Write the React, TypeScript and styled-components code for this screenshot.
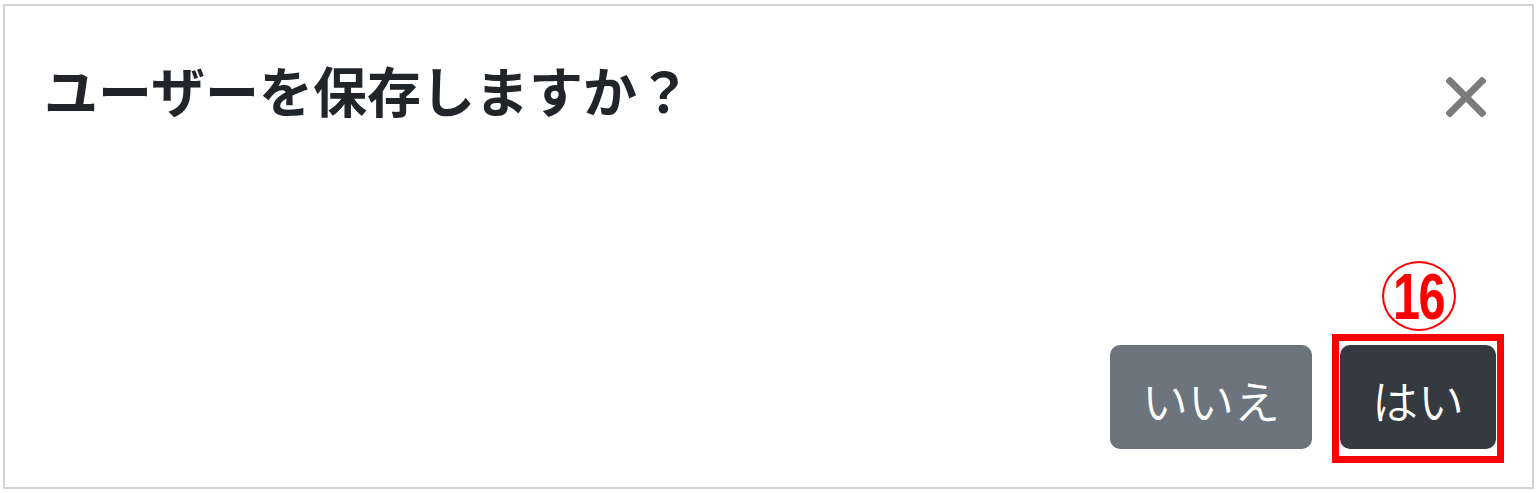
import React from "react";
import styled, { createGlobalStyle } from "styled-components";

const Global = createGlobalStyle`
  html, body { margin: 0; padding: 0; background: #ffffff; }
  body { font-family: "Noto Sans CJK JP", "Noto Sans", sans-serif; }
  * { box-sizing: border-box; }
`;

const Modal = styled.div`
  margin: 4px 4px 4px 3px;
  width: 1531px;
  height: 485px;
  border: 2px solid #d2d2d2;
  display: flex;
  flex-direction: column;
  background: #fff;
`;

const Header = styled.div`
  display: flex;
  align-items: center;
  justify-content: space-between;
  padding: 52px 45px 0 39px;
`;

const Title = styled.h5`
  margin: 0;
  font-size: 54px;
  line-height: 64px;
  font-weight: 700;
  color: #212529;
`;

const CloseButton = styled.button`
  border: 0;
  background: transparent;
  padding: 0;
  width: 42px;
  height: 42px;
  margin-top: 14px;
  display: flex;
  align-items: center;
  justify-content: center;
  cursor: pointer;
`;

const Footer = styled.div`
  margin-top: auto;
  display: flex;
  justify-content: flex-end;
  align-items: center;
  gap: 28px;
  padding: 0 36px 38px 0;
`;

const Button = styled.button<{ $variant: "secondary" | "dark" }>`
  height: 104px;
  padding: 4px 32px 0;
  border: 0;
  border-radius: 10px;
  font-family: "Noto Sans CJK JP", sans-serif;
  font-size: 46px;
  font-weight: 350;
  color: #fff;
  background: ${(p) => (p.$variant === "dark" ? "#343a40" : "#6c757d")};
  cursor: pointer;
`;

const Annotated = styled.div`
  position: relative;
  display: flex;
`;

const Highlight = styled.div`
  position: absolute;
  left: -8px;
  top: -11px;
  right: -8px;
  bottom: -14px;
  border: 7px solid #ff0000;
  pointer-events: none;
`;

const Marker = styled.span`
  position: absolute;
  left: 42px;
  top: -84px;
  width: 74px;
  height: 70px;
  border: 2px solid #ff0000;
  border-radius: 50%;
  display: flex;
  align-items: center;
  justify-content: center;
`;

const MarkerDigits = styled.span`
  color: #ff0000;
  font-family: "Liberation Sans", sans-serif;
  font-weight: 700;
  font-size: 64px;
  letter-spacing: -2px;
  line-height: 1;
  transform: scaleX(0.76);
  margin-top: 2px;
`;

export default function App() {
  return (
    <>
      <Global />
      <Modal>
        <Header>
          <Title>ユーザーを保存しますか？</Title>
          <CloseButton aria-label="閉じる">
            <svg width="40" height="40" viewBox="0 0 40 40">
              <path d="M4 4 L36 36 M36 4 L4 36" stroke="#7b7b7b" strokeWidth="7" strokeLinecap="square" />
            </svg>
          </CloseButton>
        </Header>
        <Footer>
          <Button $variant="secondary">いいえ</Button>
          <Annotated>
            <Button $variant="dark">はい</Button>
            <Highlight />
            <Marker>
              <MarkerDigits>16</MarkerDigits>
            </Marker>
          </Annotated>
        </Footer>
      </Modal>
    </>
  );
}
